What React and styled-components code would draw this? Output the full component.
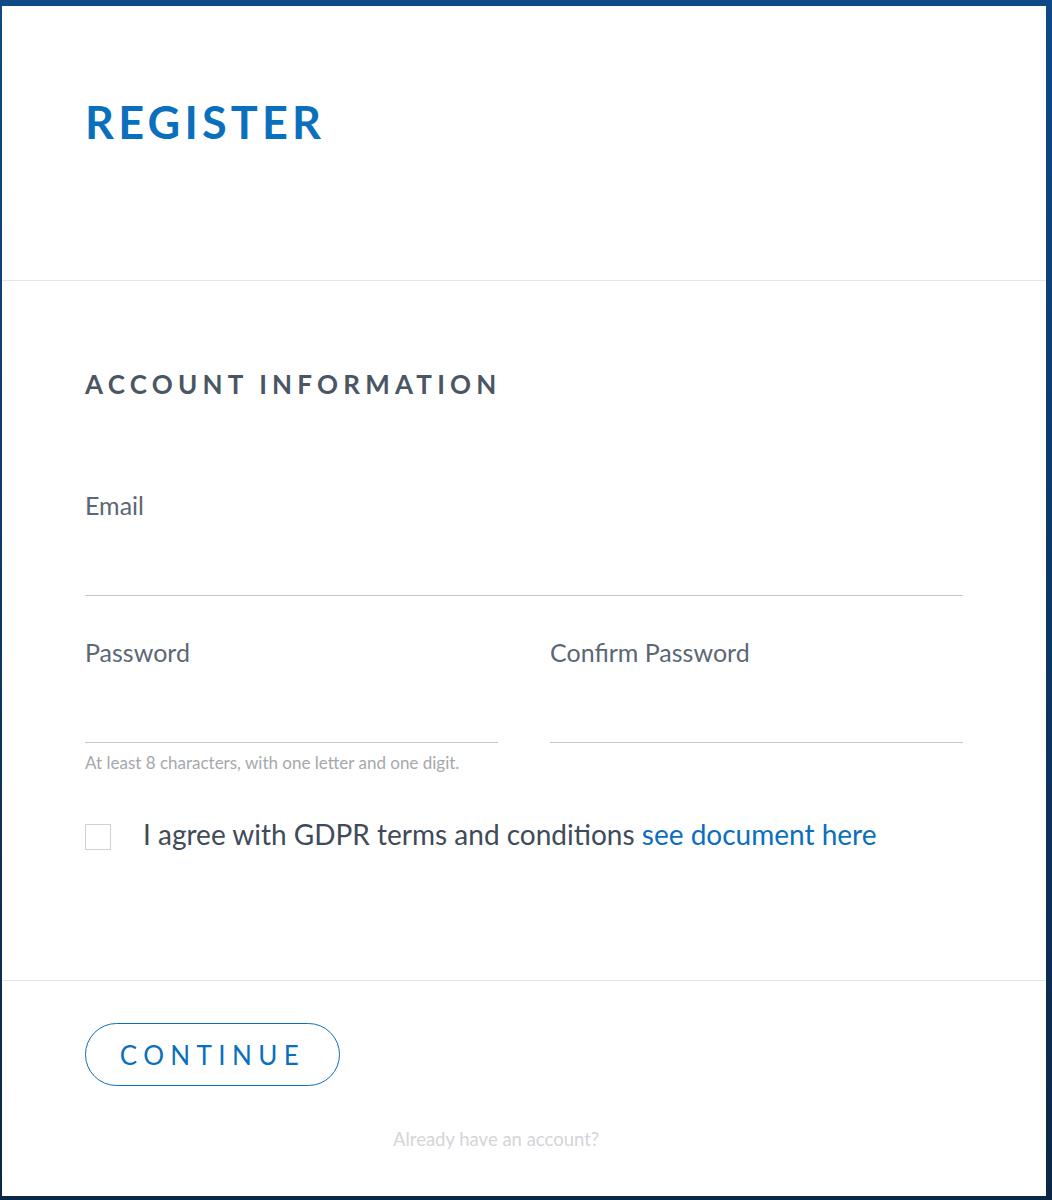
import styled, { createGlobalStyle } from "styled-components";

const GlobalStyle = createGlobalStyle`
  * {
    box-sizing: border-box;
  }

  body {
    margin: 0;
    font-family: Lato, "Open Sans", sans-serif;
    background: linear-gradient(180deg, #0d4a86 0%, #0c3766 50%, #0b2747 100%);
  }
`;

const Page = styled.div`
  padding: 6px 6px 4px 2px;
  min-height: 1200px;
`;

const Card = styled.div`
  background: #fff;
  height: 1190px;
  display: flex;
  flex-direction: column;
`;

const Header = styled.header`
  height: 275px;
  padding: 94px 83px 0;
  border-bottom: 1px solid #e3e5e8;
`;

const Title = styled.h1`
  margin: 0;
  font-size: 45px;
  line-height: 1;
  font-weight: 700;
  letter-spacing: 4.2px;
  color: #0a70bd;
`;

const Form = styled.section`
  height: 700px;
  padding: 90px 83px 0;
  border-bottom: 1px solid #e3e5e8;
`;

const SectionTitle = styled.h2`
  margin: 0 0 96px;
  font-size: 26px;
  line-height: 1;
  font-weight: 700;
  letter-spacing: 5.2px;
  color: #4a5664;
`;

const Row = styled.div`
  display: grid;
  grid-template-columns: ${(p) => (p.$cols === 2 ? "1fr 1fr" : "1fr")};
  column-gap: 52px;
  margin-bottom: ${(p) => p.$gap || 0}px;
`;

const Field = styled.label`
  display: flex;
  flex-direction: column;
`;

const Label = styled.span`
  font-size: 25px;
  line-height: 1;
  font-weight: 400;
  color: #5b6775;
`;

const Input = styled.input`
  margin-top: 50px;
  height: 28px;
  border: none;
  border-bottom: 1.5px solid #c4c6c9;
  outline: none;
  font: inherit;
  background: transparent;
`;

const Hint = styled.p`
  margin: 9px 0 0;
  font-size: 17px;
  color: #a5a8ac;
`;

const Agree = styled.label`
  display: flex;
  align-items: center;
  gap: 32px;
  margin-top: 44px;
`;

const Box = styled.span`
  width: 26px;
  height: 26px;
  border: 1.5px solid #cfd1d4;
  flex-shrink: 0;
  margin-top: 6px;
`;

const AgreeText = styled.span`
  font-size: 28px;
  color: #3f4b58;
`;

const Link = styled.a`
  color: #0a6fbe;
  text-decoration: none;
`;

const Footer = styled.footer`
  flex: 1;
  padding: 42px 83px 0;
  display: flex;
  flex-direction: column;
  align-items: flex-start;
`;

const ContinueBtn = styled.button`
  width: 255px;
  height: 63px;
  border: 1.5px solid #0a6fbe;
  border-radius: 32px;
  background: #fff;
  color: #0a6fbe;
  font-family: Lato, sans-serif;
  font-size: 26px;
  font-weight: 400;
  letter-spacing: 6.4px;
  padding: 0;
`;

const Already = styled.p`
  align-self: stretch;
  text-align: center;
  margin: 42px 0 0;
  font-size: 18.5px;
  color: #d3d5d8;
  padding-right: 56px;
`;

function App() {
  return (
    <>
      <GlobalStyle />
      <Page>
        <Card>
          <Header>
            <Title>REGISTER</Title>
          </Header>
          <Form>
            <SectionTitle>ACCOUNT INFORMATION</SectionTitle>
            <Row $gap={44}>
              <Field>
                <Label>Email</Label>
                <Input type="email" />
              </Field>
            </Row>
            <Row $cols={2}>
              <Field>
                <Label>Password</Label>
                <Input type="password" />
              </Field>
              <Field>
                <Label>Confirm Password</Label>
                <Input type="password" />
              </Field>
            </Row>
            <Hint>At least 8 characters, with one letter and one digit.</Hint>
            <Agree>
              <Box />
              <AgreeText>
                I agree with GDPR terms and conditions{" "}
                <Link href="#">see document here</Link>
              </AgreeText>
            </Agree>
          </Form>
          <Footer>
            <ContinueBtn>CONTINUE</ContinueBtn>
            <Already>Already have an account?</Already>
          </Footer>
        </Card>
      </Page>
    </>
  );
}

export default App;
